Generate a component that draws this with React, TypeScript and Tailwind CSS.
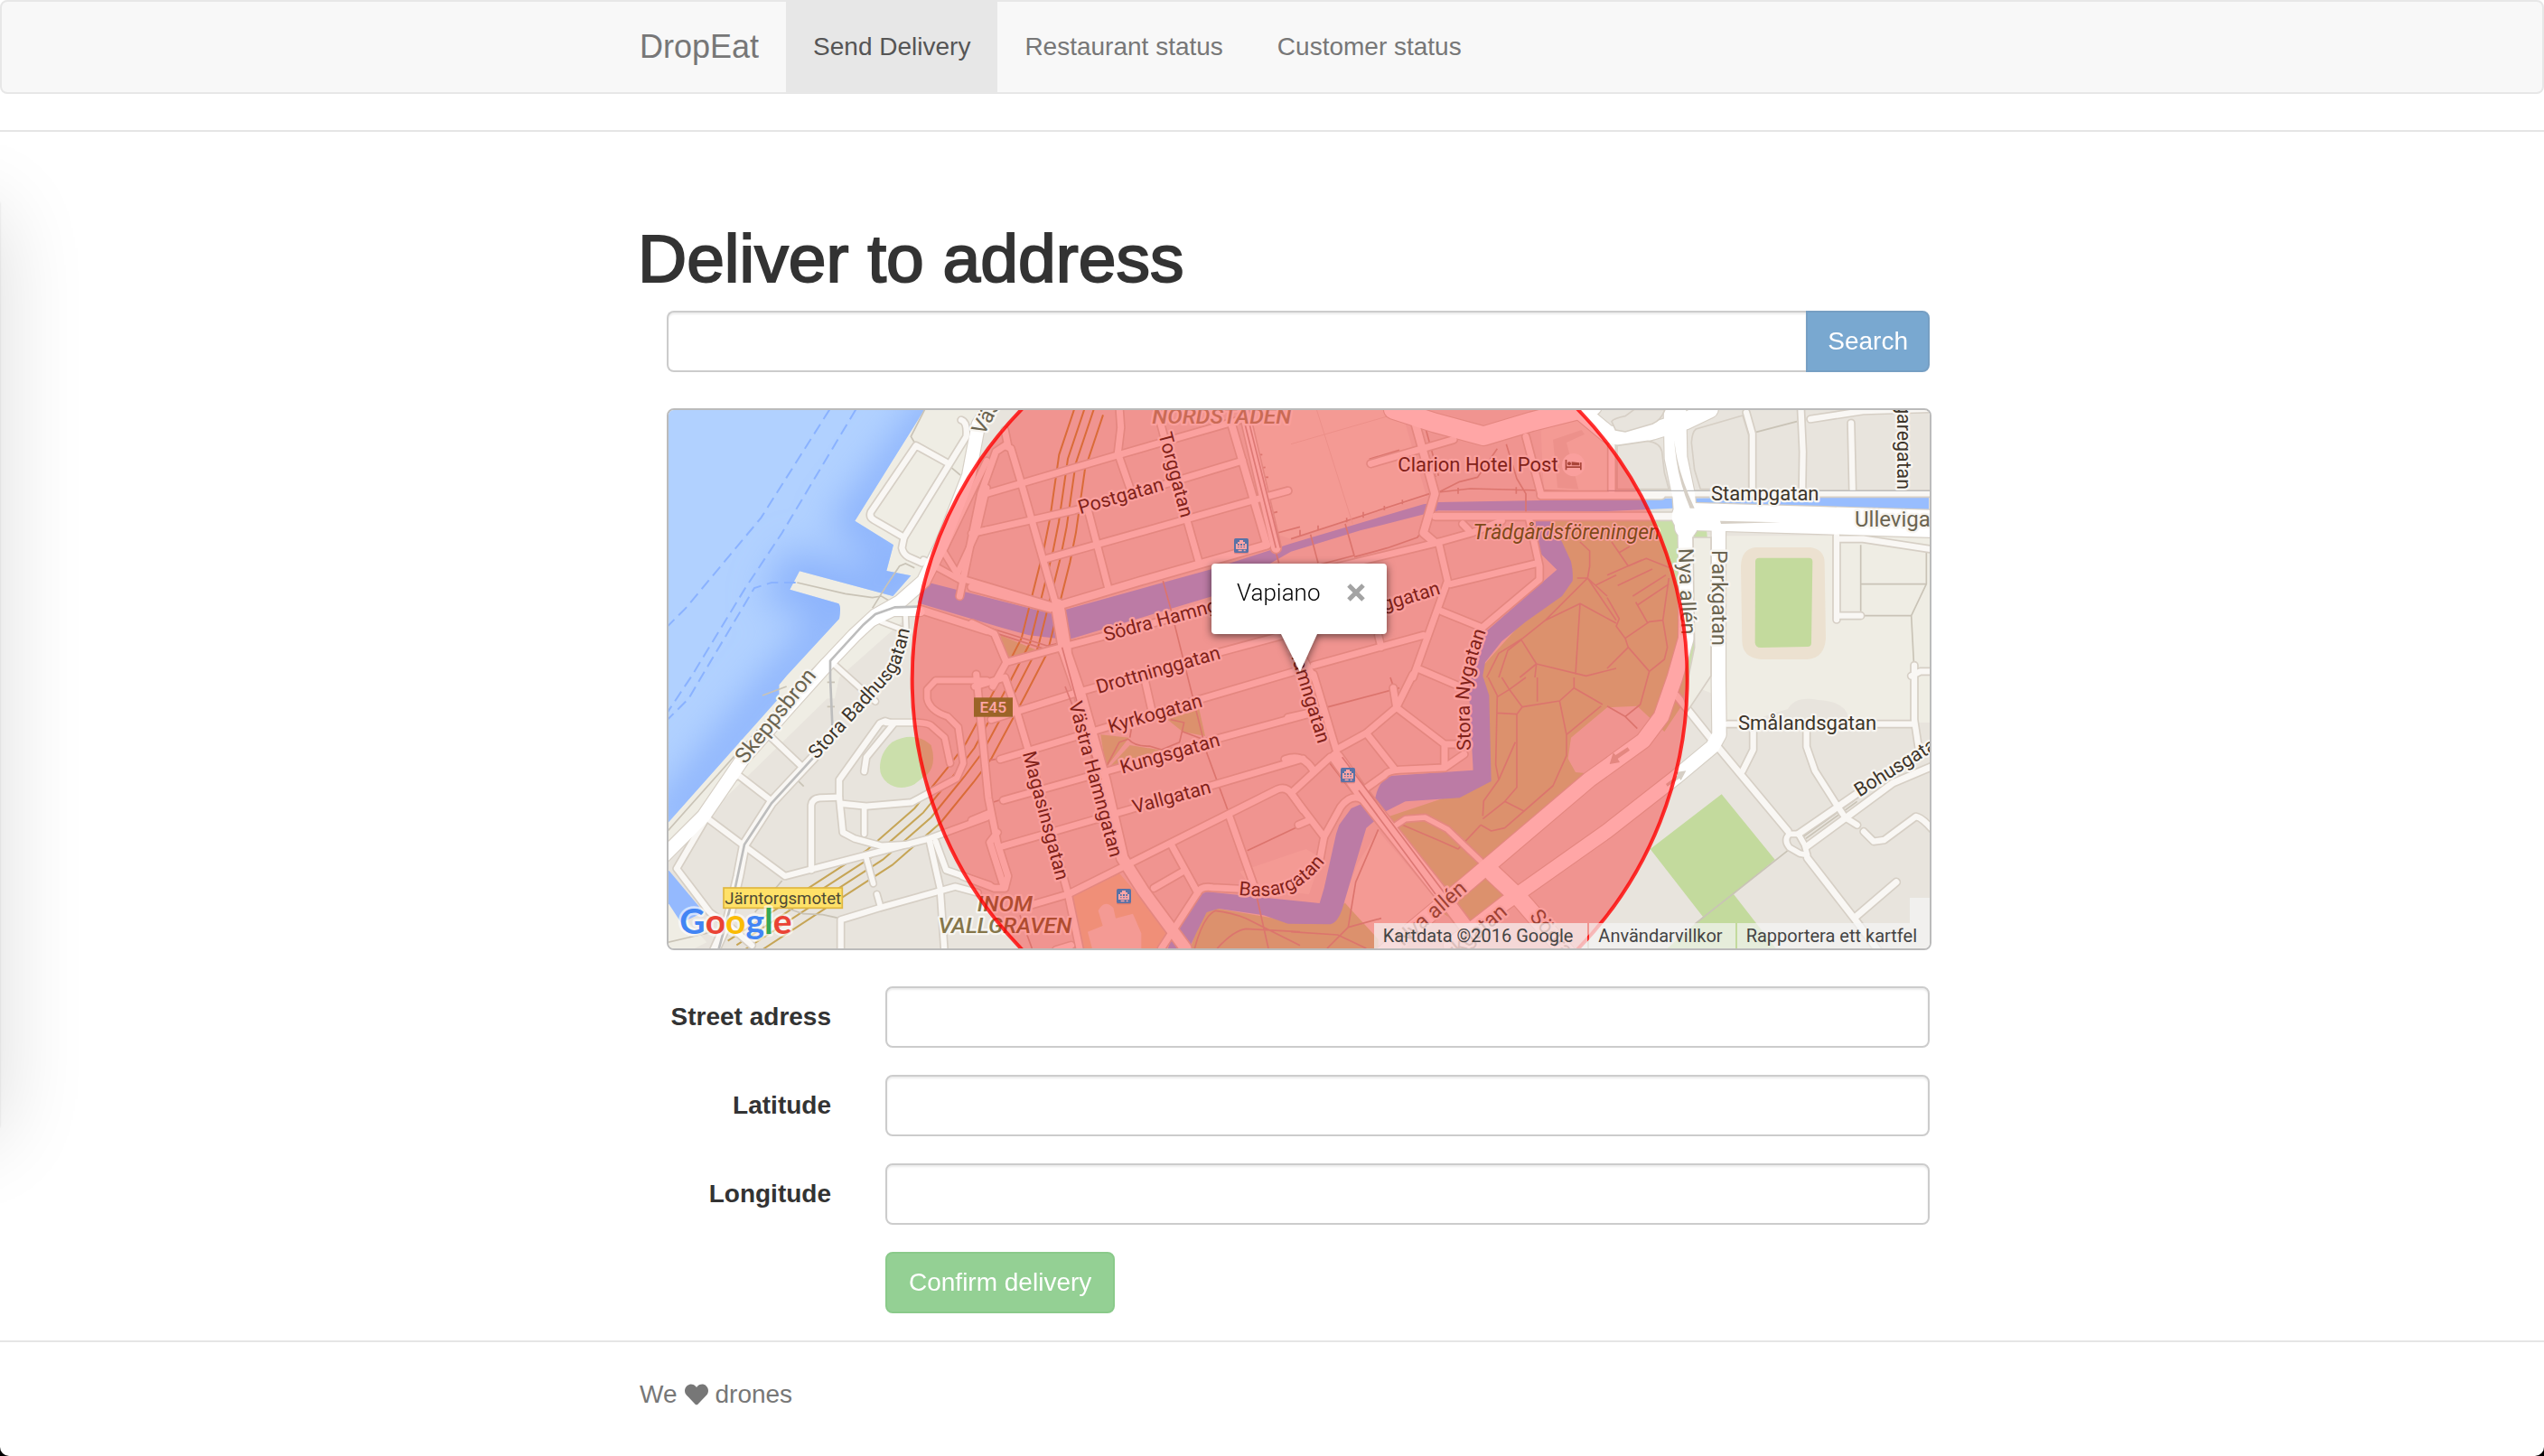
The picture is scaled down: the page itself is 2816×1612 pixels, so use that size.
import React from "react";
import { FaHeart } from "react-icons/fa";

/* The map is drawn on a sheet of 4188 x 1788 units, split in eight tiles. */
const TILES = {
  A: [0, 0],
  B: [0, 930],
  C: [1050, 0],
  D: [1050, 930],
  E: [2100, 0],
  F: [2100, 930],
  G: [3150, 0],
  H: [3150, 930],
} as const;
type Tile = keyof typeof TILES;

const at = (t: Tile) => `translate(${TILES[t][0]} ${TILES[t][1]})`;

type Shape = [Tile, string, string];
type Road = [Tile, number, string];

const WATER =
  "M0 0 H908 L652 410 L780 490 L757 576 L838 592 L778 660 L468 577 L436 638 L598 685 Q607 695 600 735 L425 925 L400 955 V998 L0 1448 Z";

const SHAPES: Shape[] = [
  // pale blocks
  ["A", "#efede4", "M900 0 H1130 L1000 290 L850 620 L760 700 L560 880 L560 1000 L150 1400 L28 1540 V1418 L400 990 L420 700 L400 560 L640 400Z"],
  ["A", "#efede4", "M400 600 L778 660 L760 560 L880 560 L860 700 L600 930 L585 1000 L420 1000Z"],
  ["B", "#efede4", "M0 700 L105 820 L160 880 L120 900 H0Z"],
  ["E", "#efede4", "M-140 20 H360 L450 330 L0 470 L-60 450Z"],
  ["E", "#efede4", "M830 110 L960 60 L1120 120 L1060 310 L840 312Z"],
  ["E", "#e3dfd6", "M870 140 L965 108 L975 122 L915 150 L955 305 L885 300Z"],
  ["F", "#efede4", "M290 510 L500 760 L380 900 L290 890 L175 740 L220 620Z"],
  ["F", "#efede4", "M-170 645 L50 570 L100 600 L60 720 L-130 700Z"],
  ["G", "#efede4", "M240 460 H1080 V1080 H390 V1000 L240 940Z"],
  ["H", "#e8e4dd", "M520 130 L600 105 Q625 60 700 75 Q790 80 800 130 L830 160 H500Z"],
  ["D", "#e8dcb9", "M320 720 L480 650 L660 860 L620 920 H360Z"],
  ["D", "#efede4", "M375 845 L425 825 L410 775 Q430 735 460 765 L468 800 L525 785 L553 850 V920 H395Z"],
  // parks
  ["B", "#cbdfab", "M735 300 Q735 250 775 215 Q850 175 905 225 Q925 290 890 325 Q860 345 850 355 Q800 380 760 350 Q735 330 735 300Z"],
  ["E", "#c9dfa8", "M820 410 L1330 408 L1380 440 L1400 640 L1400 820 L1340 960 L1240 1110 L1150 1025 L1050 1030 L930 1130 L920 1200 L945 1245 L1000 1250 L640 1540 L520 1650 L300 1400 L600 1300 L630 900 L900 600Z"],
  ["E", "#c9dfa8", "M-290 1690 L0 1740 L180 1680 L290 1800 V1850 H-340Z"],
  ["F", "#c9dfa8", "M640 655 L730 735 L590 840 L500 780Z"],
  ["D", "#c9dfa8", "M418 190 L512 200 L435 300Z"],
  ["D", "#c9dfa8", "M640 140 L745 105 L765 195 L690 180 Z"],
  ["D", "#c9dfa8", "M445 300 L515 225 L640 245 L520 270Z"],
  ["C", "#c9dfa8", "M85 790 L220 845 L105 865Z"],
  ["H", "#c3da9d", "M380 388 L557 605 L420 720 L560 900 H200 L318 795 L143 570Z"],
  ["G", "#ece1d0", "M495 498 H675 Q722 505 722 550 L726 800 Q722 865 665 870 H510 Q450 865 448 810 L444 560 Q446 502 495 498Z"],
  ["G", "#c3da9d", "M505 533 H670 Q682 533 682 545 L678 815 Q678 828 665 828 L510 831 Q493 831 491 815 L492 545 Q492 533 505 533Z"],
  // canals
  ["B", "#94b9fe", "M0 600 L150 780 L75 815 L0 700Z"],
  ["E", "#98bdfe", "M-1215 612 L-870 700 L-795 718 L-270 572 L0 485 L440 355 L490 348 L1050 338 L1270 335 L1600 333 L2118 328 V378 L1400 362 L1050 378 L490 376 L230 442 L0 512 L-260 660 L-740 805 L-870 790 L-960 765 L-1240 682Z"],
  ["E", "#98bdfe", "M812 408 H860 L900 480 L930 545 Q938 580 935 610 L900 660 L780 745 L700 810 L645 880 L637 925 L658 990 L665 1275 L560 1330 L380 1342 L315 1375 L250 1430 L220 1530 L170 1700 Q155 1745 130 1750 L-10 1748 L-90 1720 L-240 1698 L-280 1710 L-315 1780 L-340 1835 H-410 L-385 1760 L-310 1655 L-280 1642 L-200 1650 L0 1670 L95 1680 L110 1630 L150 1450 L160 1420 L200 1365 L280 1330 Q295 1260 340 1256 L605 1238 L590 960 L610 880 L645 780 L840 610 L883 572 L830 520 L815 470Z"],
];

const TUNNEL =
  "M1390 10 L1330 190 L1300 400 L1280 500 L1240 660 L1205 800 L1130 945 L1020 1150 L960 1230 L850 1365 L690 1505 L505 1625 L230 1805";
const TUNNEL_SHIFTS = ["translate(0 0)", "translate(29 14)", "translate(55 30)", "translate(86 48)"];

const PATHS: [Tile, string][] = [
  ["A", "M885 38 L838 130 L850 150"],
  ["A", "M972 233 L1002 258"],
  ["A", "M460 615 L620 652 L710 665 L740 660 L765 675"],
  ["A", "M710 700 L760 620 L800 560 L820 552 L850 566"],
  ["A", "M640 775 L480 935 L30 1440"],
  ["B", "M345 60 L425 30"],
  ["B", "M460 340 L482 362"],
  ["B", "M30 880 L180 845"],
  ["B", "M320 780 L410 675 M430 768 L480 785 L545 788 L600 800"],
  ["B", "M560 16 H585 M560 97 H585"],
  ["G", "M842 490 V710 M842 620 H1060 M1060 515 V620 L1010 725 L1020 915 M855 725 H1010"],
  ["G", "M495 115 L630 80"],
  ["H", "M600 575 L290 820"],
  ["H", "M650 530 L820 408 M660 535 L830 412"],
];

const FOOTWAYS: [Tile, string][] = [
  ["C", "M625 610 L650 700 L770 1180 L840 1370"],
  ["D", "M510 205 Q530 230 580 228 L620 240 L680 215 L695 150 L650 140 M435 300 L480 215 L510 205 M515 200 L520 170 M690 180 L770 210"],
  ["D", "M805 900 Q860 840 900 835 L1080 845 M730 900 Q760 790 800 775 Q850 780 900 800 L1080 890 M930 700 L975 900"],
  ["D", "M905 575 L1075 495 M150 790 L190 900 M50 275 L80 270 M60 415 L90 405"],
  ["C", "M0 750 L240 825 L400 790 M0 760 L230 835"],
  ["C", "M880 60 L990 480 L1010 550 M935 190 H955 M945 235 L965 232 M955 265 H975 M985 385 L1005 380 M1005 450 L1080 430"],
  ["E", "M0 470 L460 320 M65 455 L90 550 M180 420 L210 525 L0 580 M30 440 V460 M90 425 V440 M185 400 V415 M240 380 V400 M310 360 V375 M370 340 V355"],
  ["E", "M410 40 L480 265 M430 40 L490 260 M470 390 L420 465 L320 500 L210 530 M480 320 L560 280 L620 265 L685 170 M715 155 L750 270 L780 320 V380 M490 315 L595 303 L1080 315 M555 300 V320 M748 298 V320"],
  ["E", "M260 205 L360 175"],
  ["F", "M115 100 L360 35 M330 0 L340 30 M290 505 L215 680 L190 830 L300 800 M0 845 L155 855 L250 900 M190 830 L120 900"],
  ["F", "M130 220 L150 250 M125 280 L210 390 M150 255 L240 380"],
  ["F", "M655 0 L685 60 L680 290 L690 340 L640 410 L637 460 M685 118 L750 122 L768 98 L892 78 L940 35 L1035 90 M892 78 L915 190 L1030 95 M915 190 V260 L870 360 L710 500 L665 510 L630 490 M637 470 L710 412 L750 365 V122 M710 412 L775 445 M690 340 L745 215 M700 0 L725 40 L768 98 M780 0 L725 40 L685 65 M818 0 V80 M630 490 L555 570 L500 545 L370 490 M940 35 V0"],
  ["E", "M960 480 L992 510 V560 L985 600 L845 740 L770 800 L690 850 L650 930 M985 600 L1050 660 M950 600 H985 L1080 740 M960 685 L945 920 M845 740 L960 685 L1080 750 M765 805 L815 885 L760 930 M815 885 L980 925 L1080 900 M815 885 L810 930 M690 930 L720 840 L765 805 M1010 625 L1080 590"],
  ["G", "M15 480 L70 560 L130 535 L205 565 M0 590 L115 540 M35 625 L150 570 M85 660 L195 590 M100 690 L205 620 M0 665 L40 735 L30 760 L60 800 L140 745 L185 740 L205 600 M60 800 L70 830 L0 900 M70 830 L140 910 L190 870 L200 830 L185 740 M95 680 L135 750 M40 515 L75 495 M140 910 L110 1020 L60 1060 L0 1025 M60 1060 L100 1100"],
];

const MAJOR: Road[] = [
  ["A", 44, "M1120 0 L1062 90 L1030 260 L940 490 L880 610 L800 680 L720 725 L650 790 L560 885 L430 1030 L280 1200 L150 1390 L0 1540"],
  ["A", 28, "M870 712 L780 712 L690 755"],
  ["E", 62, "M340 40 L480 85 L640 128 L800 80 L1000 30"],
  ["G", 56, "M-120 20 L0 120 L60 136 L150 112 L260 78 L340 40"],
  ["G", 74, "M225 40 L228 200 L255 330 L262 430"],
  ["G", 90, "M260 395 L700 408 L1100 420"],
  ["G", 50, "M260 400 L264 640 L262 800 L225 930 L180 1060 L120 1140 L-60 1270 L-460 1610 L-760 1860"],
  ["G", 46, "M370 440 V930 L372 1120 L350 1160 L230 1260 L0 1440 L-340 1680 L-520 1820"],
  ["F", 56, "M670 650 L760 735 L920 920"],
];

const MINOR: Road[] = [
  ["A", 22, "M1005 75 Q1026 82 1022 130 L815 465"],
  ["A", 22, "M955 215 L855 160 L705 380 Q698 398 715 407 L815 465 L808 500 Q812 520 830 530 L875 550"],
  ["A", 18, "M740 745 L805 770 M820 720 L822 770"],
  ["A", 22, "M1090 210 L945 510 L1000 600 L1300 690 M1090 300 L1055 450 L990 590 M1050 450 L1090 440"],
  ["A", 22, "M880 540 L1000 605"],
  ["A", 26, "M870 705 L1090 775"],
  ["A", 20, "M578 882 L720 1010"],
  ["B", 22, "M375 200 L480 300"],
  ["B", 22, "M375 410 L265 325 L230 345 L60 635 L170 780 L240 830 L310 890"],
  ["B", 22, "M165 470 L285 560 L420 660 L690 590 L900 535 L1090 465"],
  ["B", 22, "M507 640 V425 Q510 402 535 400 L600 398"],
  ["B", 22, "M683 312 L690 265 L780 155 L752 145 L735 152 L600 340 L600 398 L612 515 L650 535 L740 560 L830 555"],
  ["B", 22, "M755 150 L860 150 Q895 152 905 160 L950 200 L968 285"],
  ["B", 22, "M612 420 L690 428 L840 415 L990 335 L1012 285 L995 165 L960 130 Q900 110 892 70 V40 L920 10 H1090"],
  ["B", 20, "M683 430 V520 M690 600 L713 685 M725 720 L735 755"],
  ["B", 22, "M605 920 V805 L735 765 L985 695 L1060 715"],
  ["B", 22, "M900 545 L935 700 L950 920 M920 545 L955 640 L1100 690"],
  ["B", 32, "M515 265 L375 415 L285 555 L265 660 L230 810 L180 920"],
  ["C", 24, "M-50 660 L20 320 L70 180 L100 160 L120 170 L150 270 L270 690 L310 860"],
  ["C", 24, "M100 110 L110 160 M20 325 L480 190 L880 75"],
  ["C", 24, "M-10 452 L330 375 L560 310 L890 210"],
  ["C", 24, "M240 535 L560 445 L930 340 L1040 310"],
  ["C", 28, "M-10 630 L250 700 L550 610 L970 490"],
  ["C", 24, "M480 30 L485 100 L475 185 L515 300 M375 370 L445 640 M605 40 L660 250 L745 550"],
  ["C", 26, "M850 80 L970 490"],
  ["C", 34, "M895 50 L1000 500"],
  ["C", 24, "M-10 750 L65 785 L105 880 L60 960 M105 880 L250 840 L780 700"],
  ["C", 44, "M275 690 L300 840"],
  ["C", 40, "M295 830 L350 990 L430 1270 L490 1530 L560 1640 L700 1830"],
  ["D", 24, "M0 30 L100 0 L140 115 L180 250 L310 720 L352 920"],
  ["D", 24, "M55 140 L340 50 L800 -80 L1080 -155"],
  ["D", 24, "M85 272 L440 165 L740 75 L1080 -25"],
  ["D", 24, "M95 408 L480 300 L800 205 L1150 110"],
  ["D", 24, "M95 560 L510 440 L1090 270"],
  ["D", 24, "M5 -10 L45 400 L75 550 L110 660 L100 700 L65 700 L-40 660 M75 515 L50 548 L95 690 M-10 475 L50 450"],
  ["D", 24, "M190 755 L310 720 L500 625 L1005 372 Q1035 360 1055 390 L1090 440"],
  ["D", 24, "M595 700 L690 645 M655 560 L740 715 L620 900 M845 460 L930 700 M565 10 L590 120 M270 905 L320 890"],
  ["D", 24, "M740 715 Q750 692 790 698 L880 703"],
  ["E", 28, "M400 40 L478 320 L440 450 L475 480"],
  ["E", 24, "M0 600 L475 485 L600 450 L700 410 M570 420 L590 440 M490 480 L520 610 L405 930"],
  ["E", 24, "M75 890 L440 790 M500 710 L635 765 L825 605 V560 L790 400 M530 620 L820 550 M290 790 L300 830"],
  ["E", 26, "M480 395 H1300 M830 325 H1230"],
  ["E", 24, "M265 220 L540 140 M780 130 L830 320 M420 900 L560 960 M1065 160 V310 M-50 700 L75 930"],
  ["F", 24, "M130 265 L0 385 L110 530 L95 610 M-20 272 Q40 250 75 310 M25 490 L60 475 M-10 133 L50 120"],
  ["F", 24, "M75 -10 L150 240 L250 185 L350 100 L405 -10 M350 100 L340 35 M350 100 L510 222 H560 M250 185 L345 305 M510 225 V295"],
  ["F", 24, "M240 375 L310 325 Q320 310 360 307 L510 300 L575 255"],
  ["F", 24, "M110 530 L165 430 Q200 385 235 405"],
  ["F", 46, "M150 265 L235 385 L500 720 L590 840"],
  ["F", 20, "M350 490 L380 470 L445 465 L520 505 L630 610"],
  ["G", 22, "M462 50 L482 120 V305 M643 30 L650 180 L648 305 M675 72 L850 45 L1080 38 M810 85 L815 305"],
  ["G", 20, "M100 320 H1080"],
  ["G", 22, "M762 460 V738 M762 725 H842 M775 470 L850 470 L1080 505"],
  ["H", 22, "M400 155 H1018 M1020 -40 V140 L1035 240 M1010 -5 L1040 -20 H1080"],
  ["H", 22, "M485 175 V240 L450 310 M662 180 V230 L690 310 L760 420 L790 465 L830 490"],
  ["H", 24, "M230 60 L350 210 L600 510 M665 600 L820 800 L910 920 M820 800 L960 680"],
  ["H", 20, "M605 520 Q585 540 605 565 L640 585 L665 590 L655 555 L635 520Z"],
  ["H", 24, "M635 520 L860 365 M665 560 L950 350 L1080 295"],
  ["H", 22, "M852 512 L885 545 L920 540 L1025 462 Q1045 465 1080 505"],
];

const STREET = "#3c3429";
const AVENUE = "#6b6450";
type Label = [Tile, number, number, number, string, number, string, ("start" | "end" | "middle")?];

const LABELS: Label[] = [
  ["B", 287, 290, -51, "Skeppsbron", 72, AVENUE],
  ["C", 30, 128, -62, "Västra", 70, AVENUE],
  ["C", 350, 388, -16, "Postgatan", 64, STREET],
  ["C", 610, 122, 75, "Torggatan", 64, STREET],
  ["C", 434, 810, -15, "Södra Hamngatan", 64, STREET],
  ["E", 499, 652, -17, "Drottninggatan", 64, STREET, "end"],
  ["D", 410, 54, -16, "Drottninggatan", 64, STREET],
  ["D", 450, 185, -16, "Kyrkogatan", 64, STREET],
  ["D", 490, 320, -16, "Kungsgatan", 64, STREET],
  ["D", 530, 452, -15, "Vallgatan", 64, STREET],
  ["D", 312, 86, 75, "Västra Hamngatan", 64, STREET],
  ["D", 158, 252, 75, "Magasinsgatan", 64, STREET],
  ["F", 90, 222, 73, "Östra Hamngatan", 64, STREET, "end"],
  ["E", 355, 245, 0, "Clarion Hotel Post", 66, STREET],
  ["F", 372, 895, -41, "Nya allén", 70, AVENUE],
  ["F", 722, 785, -40, "Parkgatan", 70, AVENUE, "end"],
  ["F", 790, 795, 50, "Södra vägen", 70, AVENUE],
  ["G", 237, 502, 88, "Nya allén", 70, AVENUE],
  ["G", 347, 507, 90, "Parkgatan", 70, AVENUE],
  ["G", 345, 342, 0, "Stampgatan", 66, STREET],
  ["G", 822, 428, 0, "Ullevigatan", 72, AVENUE],
  ["G", 963, 306, 90, "Bangaregatan", 64, STREET, "end"],
  ["H", 435, 175, 0, "Smålandsgatan", 66, STREET],
  ["H", 838, 398, -32, "Bohusgatan", 64, STREET],
];

const HALO = "[paint-order:stroke] [stroke-linejoin:round]";

function TransitIcon({ x, y }: { x: number; y: number }) {
  return (
    <g transform={`translate(${x} ${y})`}>
      <rect y="4" width="48" height="48" rx="5" fill="#8a8a8a" opacity=".4" />
      <rect width="48" height="48" rx="5" fill="#00b0ff" />
      <path
        fill="#fff"
        fillRule="evenodd"
        d="M18 6 H30 V12 H36 V18 H42 V36 H6 V18 H12 V12 H18Z M12 18 V24 H17 V18Z M21 18 V24 H27 V18Z M31 18 V24 H36 V18Z M12 28 V31 H17 V28Z M21 28 V31 H27 V28Z M31 28 V31 H36 V28Z M14 38 H26 V43 H14Z M32 38 H38 V43 H32Z"
      />
    </g>
  );
}

function CityMap() {
  return (
    <svg
      className="block h-full w-full"
      viewBox="33 42 4188 1788"
      preserveAspectRatio="xMidYMid slice"
      fontFamily="Roboto, sans-serif"
      role="img"
      aria-label="Map of the delivery area"
    >
      <defs>
        <clipPath id="river">
          <path d={WATER} />
        </clipPath>
        <filter id="soft" x="-20%" y="-20%" width="140%" height="140%">
          <feGaussianBlur stdDeviation="60" />
        </filter>
      </defs>
      <rect x="0" y="0" width="4300" height="1900" fill="#e8e4dd" />
      {SHAPES.slice(0, 2).map(([t, fill, d], i) => (
        <path key={i} transform={at(t)} fill={fill} d={d} />
      ))}
      <path d={WATER} fill="#b1d1ff" />
      <g clipPath="url(#river)">
        <path
          d="M960 0 L652 410 L780 490 L757 576 L838 592 L778 660 L468 577 L436 638 L598 685 L600 735 L400 955 L0 1448"
          fill="none"
          stroke="#86aefc"
          strokeOpacity=".85"
          strokeWidth="130"
          filter="url(#soft)"
        />
      </g>
      <g fill="none" stroke="#8ab2ff" strokeWidth="6" strokeDasharray="38 20">
        <path d="M568 40 L340 400 L240 520 L90 700 L30 760" />
        <path d="M655 40 L410 450 L290 630 L110 925 L30 1045" />
        <path d="M455 615 H375 L318 633 L150 915 L100 1000 L30 1070" />
      </g>
      {SHAPES.slice(2).map(([t, fill, d], i) => (
        <path key={i} transform={at(t)} fill={fill} d={d} />
      ))}
      <g fill="none" stroke="#c6a556" strokeWidth="6">
        {TUNNEL_SHIFTS.map((s) => (
          <path key={s} transform={s} d={TUNNEL} />
        ))}
      </g>
      <g fill="none" stroke="#c9c3b6" strokeWidth="5">
        {PATHS.map(([t, d], i) => (
          <path key={i} transform={at(t)} d={d} />
        ))}
      </g>
      <g fill="none" stroke="#c9b3a8" strokeWidth="5" strokeLinejoin="round">
        {FOOTWAYS.map(([t, d], i) => (
          <path key={i} transform={at(t)} d={d} />
        ))}
      </g>
      <g fill="none" stroke="#e2dcd2" strokeWidth="3">
        <path transform={at("E")} d="M0 155 L330 60 M85 40 L205 420" />
      </g>
      <g fill="none" strokeLinecap="round" strokeLinejoin="round">
        {[...MINOR, ...MAJOR].map(([t, w, d], i) => (
          <path key={i} transform={at(t)} d={d} stroke="#d6cfc5" strokeWidth={w + 7} />
        ))}
        {MINOR.map(([t, w, d], i) => (
          <path key={i} transform={at(t)} d={d} stroke="#f9f7f4" strokeWidth={w - 3} />
        ))}
        {MAJOR.map(([t, w, d], i) => (
          <path key={i} transform={at(t)} d={d} stroke="#ffffff" strokeWidth={w} />
        ))}
      </g>
      <g fill="none" stroke="#bdbdbd" strokeWidth="8">
        <path d="M862 695 L785 697 L720 720 L680 755 L570 875 V930 L577 1090" />
        <path transform={at("B")} d="M515 265 L375 418 L285 555 L250 720 L195 920" />
        <path transform={at("G")} strokeWidth="4" d="M0 310 H1080" />
      </g>
      <g fill="none" stroke="#cbb9b3" strokeWidth="5">
        <path transform={at("C")} d="M890 60 L1000 500 M905 60 L1015 500 M290 830 L380 1160 M300 960 L420 1270" />
        <path transform={at("F")} d="M170 265 L520 730 M225 375 L480 720" />
      </g>
      <g fill="#d6cfc5">
        <path transform={at("G")} d="M222 118 Q225 230 290 368 H275 Q225 250 222 118Z M375 410 L575 415 L378 420Z" />
        <path
          transform={at("G")}
          fill="#e8e4dd"
          stroke="#d6cfc5"
          strokeWidth="5"
          d="M15 80 Q20 70 60 62 L90 40 H192 Q180 75 150 88 L60 114 L28 108Z M280 150 Q282 115 295 105 L450 60 L470 125 V305 H310 L290 240Z M33 160 L135 145 Q175 150 182 180 L190 250 L205 305 H33Z"
        />
        <path transform={at("G")} fill="#efede4" stroke="#d6cfc5" strokeWidth="5" d="M285 465 H345 V925 L268 1040 L255 1000 L290 830Z" />
        <path
          transform={at("H")}
          d="M8 288 L20 250 L28 258 L68 232 L75 242 L35 270 L42 282Z M262 310 L245 342 L240 335 L200 362 L195 354 L235 325 L228 315Z"
        />
      </g>

      {LABELS.map(([t, x, y, r, text, size, fill, anchor], i) => (
        <text
          key={i}
          className={HALO}
          transform={`${at(t)} translate(${x} ${y}) rotate(${r})`}
          fontSize={size}
          fill={fill}
          stroke="#f7f5f1"
          strokeWidth="14"
          textAnchor={anchor ?? "start"}
        >
          {text}
        </text>
      ))}
      <path id="badhus" transform={at("B")} d="M525 274 L780 -5 Q825 -70 852 -260" fill="none" />
      <path id="nygatan" transform={at("F")} d="M597 242 L592 60 Q600 -30 665 -200" fill="none" />
      <path id="basar" transform={at("D")} d="M876 722 Q1010 738 1075 695 Q1130 660 1180 590" fill="none" />
      <g className={HALO} fontSize="64" fill={STREET} stroke="#f7f5f1" strokeWidth="14">
        <text>
          <textPath href="#badhus">Stora Badhusgatan</textPath>
        </text>
        <text>
          <textPath href="#nygatan">Stora Nygatan</textPath>
        </text>
        <text>
          <textPath href="#basar">Basargatan</textPath>
        </text>
      </g>
      <g className={HALO} fontStyle="italic" fontSize="74" stroke="#f7f5f1" strokeWidth="14" textAnchor="middle">
        <text x="1870" y="88" fontWeight="500" fill="#aca383">
          NORDSTADEN
        </text>
        <text x="1150" y="1706" fontWeight="500" fill="#85764a">
          INOM
        </text>
        <text x="1150" y="1780" fontWeight="500" fill="#85764a">
          VALLGRAVEN
        </text>
        <text x="3015" y="470" fontSize="69" fill="#3a7228" strokeWidth="10">
          Trädgårdsföreningen
        </text>
      </g>
      <g transform="translate(3038 224)">
        <circle r="38" fill="#f7f5f1" />
        <path fill="#7d6a58" d="M-27 -17 H-22 V5 H22 V-8 H27 V17 H22 V10 H-22 V17 H-27Z M-6 -10 L20 -7 V2 H-6Z" />
        <circle cx="-14" cy="-4" r="6" fill="#7d6a58" />
      </g>
      <TransitIcon x={1911} y={468} />
      <TransitIcon x={1521} y={1632} />
      <TransitIcon x={2265} y={1230} />
      <rect x="1047" y="997" width="129" height="64" fill="#669a3c" />
      <text x="1111" y="1048" fontSize="52" fontWeight="500" fill="#fff" textAnchor="middle">
        E45
      </text>
      <circle
        cx="2129"
        cy="936"
        r="1287"
        fill="#ff0000"
        fillOpacity=".35"
        stroke="#ff0000"
        strokeOpacity=".8"
        strokeWidth="12"
      />
      <rect x="216" y="1629" width="394" height="67" fill="#ffe168" stroke="#dfb63f" strokeWidth="5" />
      <text x="413" y="1682" fontSize="56" fill="#4d4a35" textAnchor="middle">
        Järntorgsmotet
      </text>
      <text
        x="70"
        y="1783"
        fontSize="117"
        className={HALO}
        fontFamily="Lato, sans-serif"
        fontWeight="700"
        stroke="#ffffff"
        strokeOpacity=".6"
        strokeWidth="16"
      >
        <tspan fill="#4285f4">G</tspan>
        <tspan fill="#ea4335">o</tspan>
        <tspan fill="#fbbc05">o</tspan>
        <tspan fill="#4285f4">g</tspan>
        <tspan fill="#34a853">l</tspan>
        <tspan fill="#ea4335">e</tspan>
      </text>
    </svg>
  );
}

function DeliveryMap() {
  return (
    <div className="relative aspect-[7/3] overflow-hidden rounded-lg border-2 border-[#bbbbbb] font-[Roboto,sans-serif]">
      <CityMap />
      <div className="absolute top-[28.5%] left-1/2 w-[194px] -translate-x-1/2 drop-shadow-[0_2px_5px_rgba(0,0,0,0.6)]">
        <div className="flex h-[78px] items-start justify-between rounded bg-white pt-4 pr-6 pl-7">
          <span className="text-[26px] leading-8 font-light text-black">Vapiano</span>
          <button type="button" aria-label="Close" className="mt-1.5 text-[#a3a3a3]">
            <svg className="size-5" viewBox="0 0 20 20" fill="none" stroke="currentColor" strokeWidth="5">
              <path d="M2 2 L18 18 M18 2 L2 18" />
            </svg>
          </button>
        </div>
        <svg className="mx-auto block h-[42px] w-10" viewBox="0 0 40 42" fill="#fff">
          <path d="M0 0 H40 L21 42Z" />
        </svg>
      </div>
      <div className="absolute right-0 bottom-0 flex flex-col items-end text-[20px] leading-7 text-[#444444]">
        <div className="h-7 w-[22px] bg-[#f5f5f5]/70" />
        <div className="flex gap-0.5">
          <span className="bg-[#f5f5f5]/70 pr-4 pl-2.5">Kartdata ©2016 Google</span>
          <a href="#terms" className="bg-[#f5f5f5]/70 pr-3.5 pl-2.5">
            Användarvillkor
          </a>
          <a href="#report" className="bg-[#f5f5f5]/70 pr-3.5 pl-2.5">
            Rapportera ett kartfel
          </a>
        </div>
      </div>
    </div>
  );
}

const FIELD =
  "h-[68px] min-w-0 flex-1 border-2 border-[#cccccc] bg-white px-6 text-[28px] text-[#555555] shadow-[inset_0_2px_2px_rgba(0,0,0,0.075)] outline-none";

function FieldRow({ id, label }: { id: string; label: string }) {
  return (
    <div className="flex items-center gap-[60px]">
      <label htmlFor={id} className="w-[182px] text-right font-bold">
        {label}
      </label>
      <input id={id} type="text" className={`${FIELD} rounded-lg`} />
    </div>
  );
}

export default function App() {
  return (
    <div className="bg-black">
      <div className="relative flex min-h-screen flex-col overflow-hidden rounded-b-[10px] bg-white font-['Liberation_Sans',Arial,sans-serif] text-[28px] leading-10 text-[#333333]">
        <div
          aria-hidden="true"
          className="pointer-events-none absolute top-[224px] -left-[400px] h-[1024px] w-[400px] shadow-[0_0_2px_rgba(0,0,0,0.12),0_10px_90px_rgba(0,0,0,0.14)]"
        />
        <nav className="rounded-lg border-2 border-[#e7e7e7] bg-[#f8f8f8]">
          <div className="mx-auto flex h-[100px] max-w-[1460px] text-[#777777]">
            <a href="#home" className="flex items-center px-[30px] text-[36px]">
              DropEat
            </a>
            <a href="#send" className="flex items-center bg-[#e7e7e7] px-[30px] text-[#555555]">
              Send Delivery
            </a>
            <a href="#restaurant" className="flex items-center px-[30px]">
              Restaurant status
            </a>
            <a href="#customer" className="flex items-center px-[30px]">
              Customer status
            </a>
          </div>
        </nav>
        <hr className="mt-10 border-t-2 border-[#e5e5e5]" />
        <main className="mx-auto w-full max-w-[1460px] pt-[100px] pb-[30px]">
          <h1 className="pl-7 text-[75px] leading-[80px] [-webkit-text-stroke:2px_#333333]">Deliver to address</h1>
          <div className="mt-[18px] flex flex-col gap-10 pl-[60px]">
            <form className="flex pr-0.5" onSubmit={(e) => e.preventDefault()}>
              <input type="text" aria-label="Address" className={`${FIELD} rounded-l-lg border-r-0`} />
              <button
                type="submit"
                disabled
                className="h-[68px] rounded-r-lg border-2 border-[#2e6da4] bg-[#337ab7] px-[22px] text-white disabled:opacity-65"
              >
                Search
              </button>
            </form>
            <DeliveryMap />
            <form className="flex flex-col gap-[30px] pr-0.5" onSubmit={(e) => e.preventDefault()}>
              <FieldRow id="street" label="Street adress" />
              <FieldRow id="latitude" label="Latitude" />
              <FieldRow id="longitude" label="Longitude" />
              <div className="pl-[242px]">
                <button
                  type="submit"
                  disabled
                  className="block h-[68px] rounded-lg border-2 border-[#4cae4c] bg-[#5cb85c] px-6 text-white disabled:opacity-65"
                >
                  Confirm delivery
                </button>
              </div>
            </form>
          </div>
        </main>
        <hr className="border-t-2 border-[#e5e5e5]" />
        <footer className="mx-auto flex w-full max-w-[1460px] items-center gap-2 px-[30px] pt-[38px] text-[#777777]">
          <span>We</span>
          <FaHeart className="size-[26px]" aria-label="love" />
          <span>drones</span>
        </footer>
      </div>
    </div>
  );
}
